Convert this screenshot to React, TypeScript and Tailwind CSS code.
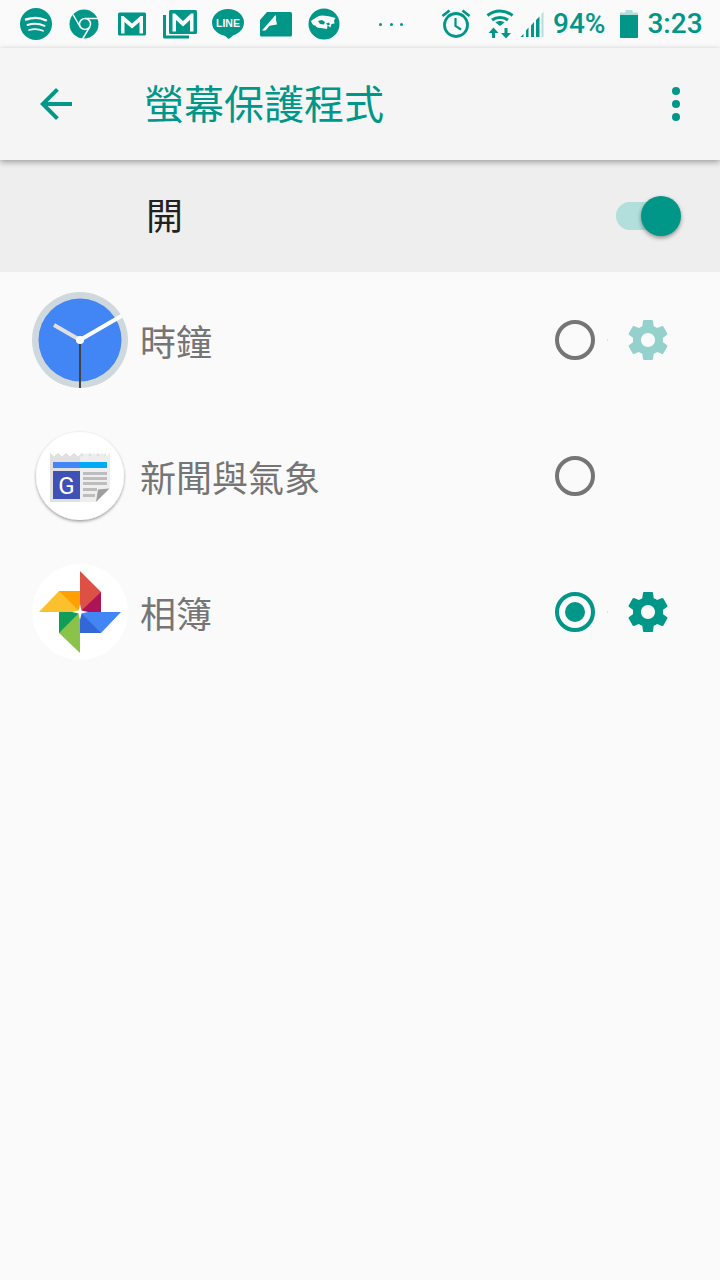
import React from 'react';

const GEAR = "M19.43 12.98c.04-.32.07-.64.07-.98s-.03-.66-.07-.98l2.11-1.65c.19-.15.24-.42.12-.64l-2-3.46c-.12-.22-.39-.3-.61-.22l-2.49 1c-.52-.4-1.08-.73-1.69-.98l-.38-2.65C14.46 2.18 14.25 2 14 2h-4c-.25 0-.46.18-.49.42l-.38 2.65c-.61.25-1.17.59-1.69.98l-2.49-1c-.23-.09-.49 0-.61.22l-2 3.46c-.13.22-.07.49.12.64l2.11 1.65c-.04.32-.07.65-.07.98s.03.66.07.98l-2.11 1.65c-.19.15-.24.42-.12.64l2 3.46c.12.22.39.3.61.22l2.49-1c.52.4 1.08.73 1.69.98l.38 2.65c.03.24.24.42.49.42h4c.25 0 .46-.18.49-.42l.38-2.65c.61-.25 1.17-.59 1.69-.98l2.49 1c.23.09.49 0 .61-.22l2-3.46c.12-.22.07-.49-.12-.64l-2.11-1.65zM12 15.5c-1.93 0-3.5-1.57-3.5-3.5s1.57-3.5 3.5-3.5 3.5 1.57 3.5 3.5-1.57 3.5-3.5 3.5z";

const TEAL = '#009688';
const BG = '#fafafa';

const Spotify = () => (
    <svg width="32" height="48" viewBox="0 0 32 48">
        <circle cx="16" cy="24" r="16" fill={TEAL} />
        <g fill="none" stroke={BG} strokeLinecap="round">
            <path d="M6 19.5c6-2 14-2 20 .8" strokeWidth="2.4" />
            <path d="M7.5 25c5-1.6 12-1.4 17 .8" strokeWidth="2" />
            <path d="M9 30c4.5-1.2 10-1 14 .8" strokeWidth="1.8" />
        </g>
    </svg>
);

const Chrome = () => (
    <svg width="32" height="48" viewBox="0 0 32 48">
        <circle cx="16" cy="24" r="14.5" fill={TEAL} />
        <circle cx="17" cy="24" r="5.5" fill="none" stroke={BG} strokeWidth="1.5" />
        <path d="M17 18.5h13M12.5 27.5L5 14.5M22 26.5L14.5 39" stroke={BG} strokeWidth="1.5" fill="none" />
    </svg>
);

const Gmail = () => (
    <svg width="32" height="48" viewBox="0 0 32 48">
        <rect x="2" y="12.5" width="28" height="23" rx="1.5" fill={TEAL} />
        <path d="M5 33.5V16h2.500L16 23.5 24.5 16H27v17.5h-3.500V22L16 28.5 8.500 22v11.5z" fill={BG} />
    </svg>
);

const GmailStack = () => (
    <svg width="36" height="48" viewBox="0 0 36 48" className="-mx-0.5">
        <path d="M1 15h3v20.5h23v3H2.5A1.5 1.5 0 0 1 1 37z" fill={TEAL} />
        <rect x="7" y="10" width="28" height="24" rx="1.5" fill={TEAL} />
        <path d="M10.5 31.5V13.5H13l8 7.5 8-7.500h2.500v18H28V20l-7 6.500L14 20v11.5z" fill={BG} />
    </svg>
);

const Line = () => (
    <svg width="32" height="48" viewBox="0 0 32 48">
        <ellipse cx="16" cy="22.5" rx="16" ry="13.5" fill={TEAL} />
        <path d="M11 34l5.5 5c2-1 4-3 5.5-5z" fill={TEAL} />
        <text x="16" y="26.5" textAnchor="middle" fill={BG} fontSize="10.5" fontWeight="700" fontFamily="'Liberation Sans', sans-serif">LINE</text>
    </svg>
);

const Paper = () => (
    <svg width="32" height="48" viewBox="0 0 32 48">
        <rect x="0" y="12" width="32" height="24.5" rx="1.5" fill={TEAL} />
        <path d="M0 12h7L0 20z" fill={BG} />
        <path d="M2 30.5L15.5 15l.8 3L5.500 30.500z" fill={BG} />
        <path d="M8 26l7.500-8.500 1.500 7z" fill={BG} />
    </svg>
);

const Mask = () => (
    <svg width="32" height="48" viewBox="0 0 32 48">
        <circle cx="16" cy="24" r="15.5" fill={TEAL} />
        <path d="M3 21c3-2 7-5.500 11-5.500 4 0 9 1 13.500 2.500l-1.500 2.500.5 3-3 .5-1 3.500-3-2-.5 3.500L13 28c-3 .5-5-1-5.500-2.500-2 .5-3.500-1.500-4.500-4.500z" fill={BG} />
        <path d="M10 21l4-1 3 2-1 2.500-4-.5zM18 23.500l3-1 1 2-2 1z" fill={TEAL} />
    </svg>
);

const Alarm = () => (
    <svg width="32" height="48" viewBox="0 0 32 48">
        <circle cx="16" cy="25" r="11.5" fill="none" stroke={TEAL} strokeWidth="2.8" />
        <path d="M15.5 18v8l5.500 3.500" fill="none" stroke={TEAL} strokeWidth="2.2" />
        <path d="M2.5 16l7-5.500M29.5 16l-7-5.500" fill="none" stroke={TEAL} strokeWidth="2.8" />
    </svg>
);

const Wifi = () => (
    <svg width="30" height="48" viewBox="0 0 30 48">
        <g fill="none" stroke={TEAL} strokeWidth="3">
            <path d="M1.5 15.5c7.500-6 17.500-6 25 0" />
            <path d="M6 20c4.500-3.500 11.500-3.500 16 0" />
        </g>
        <path d="M14 26l-4.500-3.500c2.500-2 6.500-2 9 0z" fill={TEAL} />
        <path d="M7.5 27.5l5 5.500H9v5H6v-5H2.500zM18.500 28h3v5H25l-5 5.500-5-5.500h3.500z" fill={TEAL} />
    </svg>
);

const Signal = () => (
    <svg width="24" height="48" viewBox="0 0 24 48">
        <path d="M.5 37l3-3v3zM6 37v-6.500l2.500-3V37zM11 37V25.500l3-3.500v15zM16 37V20l3.500-3.500V37z" fill={TEAL} />
        <path d="M21.5 37V14l2-2.500V37z" fill="#b2dfdb" />
    </svg>
);

const Battery = () => (
    <svg width="18" height="48" viewBox="0 0 18 48">
        <path d="M5.5 10h7v2.500H17a1 1 0 0 1 1 1V38H0V13.5a1 1 0 0 1 1-1h4.500z" fill="#b2dfdb" />
        <path d="M0 15h18v22a1 1 0 0 1-1 1H1a1 1 0 0 1-1-1z" fill={TEAL} />
    </svg>
);

const ClockIcon = () => (
    <svg width="96" height="96" viewBox="0 0 96 96">
        <defs>
            <clipPath id="clock-face"><circle cx="48" cy="48" r="48" /></clipPath>
        </defs>
        <circle cx="48" cy="48" r="48" fill="#cfd8dc" />
        <circle cx="48" cy="48" r="41.5" fill="#4285f4" />
        <g clipPath="url(#clock-face)">
            <path d="M48 48L22 33" stroke="#e0e0e0" strokeWidth="4" />
            <path d="M48 48L91 23" stroke="#fff" strokeWidth="4" />
            <path d="M48 48V96" stroke="#424242" strokeWidth="2" />
        </g>
        <circle cx="48" cy="48" r="4" fill="#fff" />
    </svg>
);

const NewsIcon = () => (
    <svg width="96" height="96" viewBox="0 0 96 96" className="overflow-visible">
        <defs>
            <filter id="news-shadow" x="-20%" y="-20%" width="140%" height="140%">
                <feDropShadow dx="0" dy="1.5" stdDeviation="1.5" floodColor="#000" floodOpacity="0.4" />
            </filter>
        </defs>
        <circle cx="48" cy="48" r="44" fill="#fff" filter="url(#news-shadow)" />
        <path d="M18 25l4 3.500 4-3.500 4 3.500 4-3.500 4 3.500 4-3.500 4 3.500 4-3.500 4 3.500 4-3.500 4 3.500 4-3.500 4 3.500 4-3.500V60L64 74H19a1 1 0 0 1-1-1z" fill="#e0e0e0" />
        <path d="M48 28.5l2 0 4-3.500 4 3.500 4-3.500 4 3.500 4-3.500 4 3.500 4-3.500V60L64 74H48z" fill="#eeeeee" />
        <rect x="21" y="34" width="27" height="6" fill="#4285f4" />
        <rect x="48" y="34" width="27" height="6" fill="#03a9f4" />
        <rect x="21" y="43" width="27" height="28" fill="#3f51b5" />
        <text x="34.5" y="65.5" textAnchor="middle" fill="#fff" fontSize="24" fontWeight="400" fontFamily="Roboto, sans-serif">G</text>
        <g fill="#bdbdbd">
            <rect x="51" y="44" width="24" height="3" />
            <rect x="51" y="49" width="24" height="3" />
            <rect x="51" y="54" width="24" height="3" />
            <rect x="51" y="60" width="14" height="3" />
            <rect x="51" y="66" width="12" height="3" />
        </g>
        <path d="M77.5 60.5L66 61.5 64 74z" fill="#9e9e9e" />
    </svg>
);

const PhotosIcon = () => (
    <svg width="96" height="96" viewBox="0 0 96 96">
        <circle cx="48" cy="48" r="48" fill="#fff" />
        <path d="M48 7l21 21v20H48z" fill="#dd5144" />
        <path d="M48 48l21-20v20z" fill="#ad1457" />
        <path d="M7 48l20-21h21v21z" fill="#fbc02d" />
        <path d="M27 27h21v21z" fill="#ffa000" />
        <path d="M48 48h41L69 69H48z" fill="#4285f4" />
        <path d="M48 48l21 21H48z" fill="#3367d6" />
        <path d="M27 48h21v41L27 69z" fill="#8bc34a" />
        <path d="M27 48h21L27 69z" fill="#0f9d58" />
        <path d="M48 40l1.500 6.500L56 48l-6.500 1.500L48 56l-1.500-6.500L40 48l6.500-1.500z" fill="#fff" />
    </svg>
);

const Radio: React.FC<{ checked?: boolean }> = ({ checked }) => (
    <div className={`flex h-10 w-10 items-center justify-center rounded-full border-4 ${checked ? 'border-[#009688]' : 'border-[#757575]'}`}>
        {checked && <div className="h-5 w-5 rounded-full bg-[#009688]" />}
    </div>
);

const Gear: React.FC<{ faded?: boolean }> = ({ faded }) => (
    <svg width="48" height="48" viewBox="0 0 24 24" fill={TEAL} opacity={faded ? 0.4 : 1}>
        <path d={GEAR} />
    </svg>
);

const Row: React.FC<{ icon: React.ReactNode; label: string; checked?: boolean; gear?: 'faded' | 'on' }> = ({ icon, label, checked, gear }) => (
    <div className="flex h-[136px] items-center pl-8 pr-12">
        {icon}
        <span className="ml-3 flex-1 text-[36px] leading-none text-[#757575]">{label}</span>
        <Radio checked={checked} />
        <div className={`ml-3 mr-4 h-0.5 w-px ${gear ? 'bg-[#e0e0e0]' : 'bg-transparent'}`} />
        <div className="w-12">{gear && <Gear faded={gear === 'faded'} />}</div>
    </div>
);

export default function App() {
    return (
        <div className="flex h-[1280px] w-[720px] flex-col overflow-hidden bg-[#fafafa] font-['Noto_Sans_CJK_TC','Noto_Sans',sans-serif]">
            <div className="flex h-12 items-center pl-5 text-[#009688]">
                <div className="flex w-[336px] items-center gap-4">
                    <Spotify />
                    <Chrome />
                    <Gmail />
                    <GmailStack />
                    <Line />
                    <Paper />
                    <Mask />
                </div>
                <div className="ml-[23px] flex w-[24px] justify-between">
                    <div className="h-[3px] w-[3px] rounded-full bg-[#009688]" />
                    <div className="h-[3px] w-[3px] rounded-full bg-[#009688]" />
                    <div className="h-[3px] w-[3px] rounded-full bg-[#009688]" />
                </div>
                <div className="ml-[37px]"><Alarm /></div>
                <div className="ml-[14px]"><Wifi /></div>
                <div className="ml-[4px]"><Signal /></div>
                <span className="ml-[9px] font-['Roboto',sans-serif] text-[28px] font-medium leading-none">94%</span>
                <div className="ml-[15px]"><Battery /></div>
                <span className="ml-[9px] font-['Roboto',sans-serif] text-[28px] font-medium leading-none">3:23</span>
            </div>

            <div className="relative z-10 flex h-28 items-center bg-[#f5f5f5] shadow-[0_2px_6px_rgba(0,0,0,0.35)]">
                <svg width="48" height="48" viewBox="0 0 24 24" fill={TEAL} className="ml-8">
                    <path d="M20 11H7.83l5.59-5.59L12 4l-8 8 8 8 1.41-1.41L7.83 13H20v-2z" />
                </svg>
                <span className="-mt-1 ml-[64px] flex-1 text-[40px] leading-none text-[#009688]">螢幕保護程式</span>
                <div className="mr-10 flex flex-col gap-[5px]">
                    <div className="h-2 w-2 rounded-full bg-[#009688]" />
                    <div className="h-2 w-2 rounded-full bg-[#009688]" />
                    <div className="h-2 w-2 rounded-full bg-[#009688]" />
                </div>
            </div>

            <div className="flex h-28 items-center bg-[#eeeeee] pl-[146px] pr-11">
                <span className="-mt-1 flex-1 text-[37px] leading-none text-[#212121]">開</span>
                <div className="relative h-7 w-[60px] rounded-full bg-[#b2dfdb]">
                    <div className="absolute -top-1.5 left-[25px] h-10 w-10 rounded-full bg-[#009688] shadow-[0_2px_4px_rgba(0,0,0,0.4)]" />
                </div>
            </div>

            <Row icon={<ClockIcon />} label="時鐘" gear="faded" />
            <Row icon={<NewsIcon />} label="新聞與氣象" />
            <Row icon={<PhotosIcon />} label="相簿" checked gear="on" />
        </div>
    );
}
